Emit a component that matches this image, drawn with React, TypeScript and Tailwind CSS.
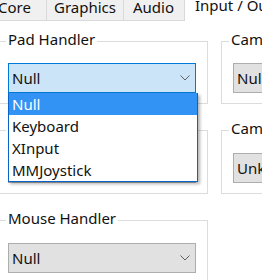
import React from "react";

const FONT = { fontFamily: '"Noto Sans", "Open Sans", sans-serif' };

function Chevron() {
  return (
    <svg width="10" height="6" viewBox="0 0 10 6" className="shrink-0">
      <path d="M0.5 0.5 L5 5 L9.5 0.5" fill="none" stroke="#606060" strokeWidth="1" />
    </svg>
  );
}

function Combo({
  value,
  active = false,
  children,
}: {
  value: string;
  active?: boolean;
  children?: React.ReactNode;
}) {
  return (
    <div
      className={
        active
          ? "relative flex h-[30px] w-[188px] items-center border border-[#0078d7] bg-[#cce4f7] pl-[3px] pr-[5px] text-[15px] text-[#111]"
          : "relative flex h-[30px] w-[188px] items-center border border-[#adadad] bg-[#e1e1e1] pl-[3px] pr-[5px] text-[15px] text-[#111]"
      }
    >
      <span className="flex-1 whitespace-nowrap leading-[20px]">{value}</span>
      <Chevron />
      {children}
    </div>
  );
}

function Group({
  title,
  legendClass,
  className,
  children,
}: {
  title: string;
  legendClass: string;
  className: string;
  children: React.ReactNode;
}) {
  return (
    <fieldset className={"w-[212px] shrink-0 border border-[#dcdcdc] px-[11px] pb-[10px] " + className}>
      <legend className={"px-[2px] pb-[5px] text-[15px] leading-[14px] text-[#111] whitespace-nowrap " + legendClass}>
        {title}
      </legend>
      {children}
    </fieldset>
  );
}

export default function App() {
  const items = ["Null", "Keyboard", "XInput", "MMJoystick"];
  return (
    <div className="relative h-[280px] w-[262px] overflow-hidden bg-white" style={FONT}>
      {/* Tab bar */}
      <div className="-ml-[20px] flex h-[21px] text-[15px] text-[#111]">
        <div className="h-[21px] w-[67px] shrink-0 border-b border-r border-[#d9d9d9] bg-[#f0f0f0] pl-[18px] leading-[14px] whitespace-nowrap">
          Core
        </div>
        <div className="h-[21px] w-[77px] shrink-0 border-b border-r border-[#d9d9d9] bg-[#f0f0f0] pl-[7px] leading-[14px] whitespace-nowrap">
          Graphics
        </div>
        <div className="h-[21px] w-[60px] shrink-0 border-b border-[#d9d9d9] bg-[#f0f0f0] pl-[9px] leading-[14px] whitespace-nowrap">
          Audio
        </div>
        <div className="h-[21px] flex-1 border-l border-[#d9d9d9] bg-white pl-[10px] leading-[10px] whitespace-nowrap">
          Input / Output
        </div>
      </div>

      {/* Content */}
      <div className="-ml-[4px] mt-[11px] flex gap-[13px]">
        <div className="flex w-[212px] shrink-0 flex-col">
          <Group title="Pad Handler" legendClass="-ml-[2px]" className="pt-[12px]">
            <Combo value="Null" active>
              <div className="absolute left-[-1px] top-[29px] z-10 w-[190px] border-x border-b border-[#0a64c8] bg-white shadow-[2px_2px_3px_rgba(0,0,0,0.3)]">
                {items.map((it, i) => (
                  <div
                    key={it}
                    className={
                      i === 0
                        ? "h-[22px] bg-[#3393f5] pl-[3px] leading-[22px] text-white"
                        : "h-[22px] pl-[3px] leading-[22px] text-[#111]"
                    }
                  >
                    {it}
                  </div>
                ))}
              </div>
            </Combo>
          </Group>
          <Group title="Keyboard Handler" legendClass="-ml-[2px]" className="mt-[17px] pt-[13px]">
            <Combo value="Null" />
          </Group>
          <Group title="Mouse Handler" legendClass="-ml-[2px]" className="mt-[17px] pt-[13px]">
            <Combo value="Null" />
          </Group>
        </div>
        <div className="flex w-[212px] shrink-0 flex-col">
          <Group title="Camera" legendClass="-ml-[4px]" className="pt-[12px]">
            <Combo value="Null" />
          </Group>
          <Group title="Camera type" legendClass="-ml-[4px]" className="mt-[17px] pt-[13px]">
            <Combo value="Unknown" />
          </Group>
        </div>
      </div>
    </div>
  );
}
